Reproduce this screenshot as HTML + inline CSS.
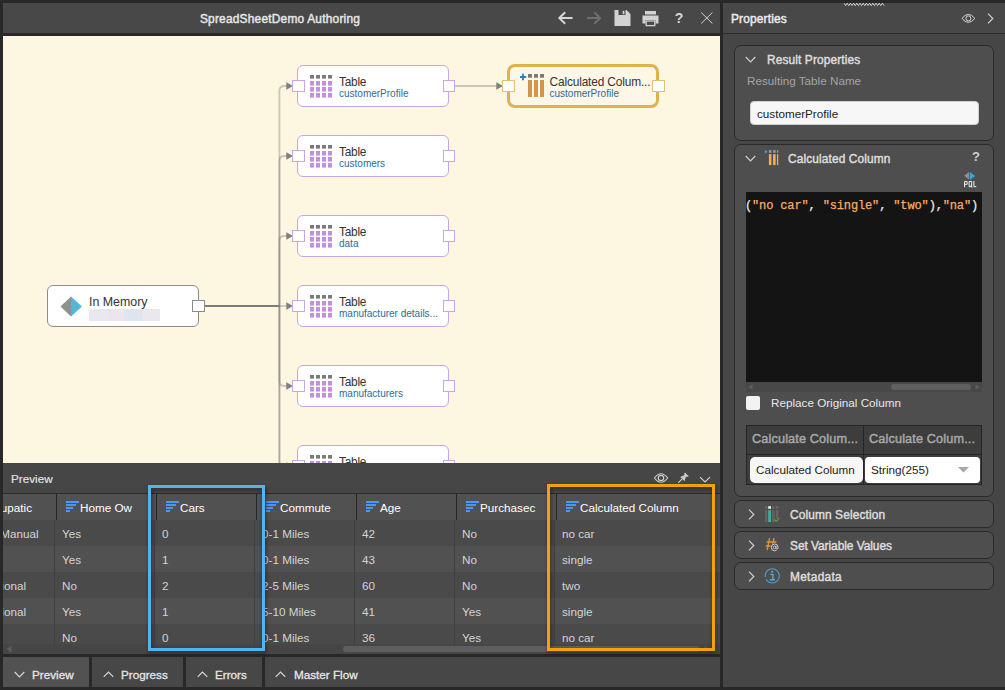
<!DOCTYPE html>
<html>
<head>
<meta charset="utf-8">
<title>SpreadSheetDemo Authoring</title>
<style>
*{box-sizing:border-box;margin:0;padding:0}
html,body{width:1005px;height:690px;overflow:hidden;background:#282828;font-family:"Liberation Sans",sans-serif;}
.abs{position:absolute}
#root{position:relative;width:1005px;height:690px;overflow:hidden;background:#282828}
/* left header */
#hdr{left:3px;top:3px;width:717px;height:30px;background:#484848}
#hdr .title{left:0;top:1px;width:554px;height:30px;line-height:30px;text-align:center;color:#e6e6e6;font-size:11.9px;font-weight:normal;-webkit-text-stroke:0.45px #e6e6e6;letter-spacing:0.22px}
/* canvas */
#canvas{left:3px;top:36px;width:717px;height:427px;background:#fdf6e1;overflow:hidden}
.node{position:absolute;width:152px;height:42px;background:#fff;border:1px solid #c9a6e6;border-radius:6px}
.node .t1{position:absolute;left:41px;top:9px;font-size:11.9px;letter-spacing:-0.25px;color:#333;white-space:nowrap;line-height:14px}
.node .t2{position:absolute;left:41px;top:22px;font-size:10px;color:#2a6c9c;white-space:nowrap;line-height:12px}
.port{position:absolute;width:12.5px;height:12px;background:#fff;border:1px solid #c9a6e6}
.ticon{position:absolute;left:12px;top:8px;width:22px;height:24px}
/* preview */
#prev{left:3px;top:463px;width:717px;height:191px;background:#464646;overflow:hidden}
#prev .ptitle{left:8px;top:8px;font-size:11.7px;color:#e0e0e0;-webkit-text-stroke:0.2px #e0e0e0;line-height:16px}
#grid{left:0;top:30px;width:718px;height:161px;overflow:hidden}
.hrow{position:absolute;left:0;top:0;width:718px;height:27px;background:#515151;border-top:1px solid #2c2c2c}
.drow{position:absolute;left:0;width:718px;height:26px}
.r0{background:#4a4a4a}.r1{background:#515151}
.hc{position:absolute;top:0;height:26px;line-height:27px;color:#ffffff;font-size:11.7px;white-space:nowrap;border-left:1px solid #262626;padding-left:23px}
.dc{position:absolute;top:0;height:26px;line-height:27px;color:#d4d4d4;font-size:11.7px;white-space:nowrap}
.vs{position:absolute;top:27px;width:1px;height:133px;background:#3f3f3f}
/* tabs */
.tl{top:0;line-height:35px;-webkit-text-stroke:0.3px #e6e6e6}
.tab{position:absolute;top:657px;height:30px;background:#474747;color:#e6e6e6;font-size:11.7px;line-height:34px;white-space:nowrap}
/* properties */
#props{left:723px;top:3px;width:282px;height:684px;background:#464646}
#props .ph{left:0;top:0;width:282px;height:31px;background:#484848;border-bottom:1px solid #2d2d2d}
.panel{position:absolute;left:11px;width:260px;background:#4e4e4e;border:1px solid #2a2a2a;border-radius:7px}
.code{font-family:'Liberation Mono',monospace;font-size:12px;color:#ececec;white-space:pre;line-height:16px;letter-spacing:-0.14px;-webkit-text-stroke:0.25px #ececec}
.code b{font-weight:normal;color:#f6ae66;-webkit-text-stroke:0.25px #f6ae66}
.pt{position:absolute;font-size:11.9px;letter-spacing:0.12px;font-weight:normal;-webkit-text-stroke:0.45px currentColor;color:#dcdcdc;white-space:nowrap;line-height:16px}
</style>
</head>
<body>
<div id="root">

<!-- ===== left header ===== -->
<div id="hdr" class="abs">
  <div class="title abs">SpreadSheetDemo Authoring</div>
  <svg class="abs" style="left:552px;top:5px" width="164" height="22" viewBox="555 8 164 22">
    <path d="M572.5 18 H559.5 M565.2 12.2 L559.3 18 L565.2 23.8" stroke="#d6d6d6" stroke-width="2" fill="none"/>
    <path d="M587 18 H600 M594.3 12.2 L600.2 18 L594.3 23.8" stroke="#6e6e6e" stroke-width="2" fill="none"/>
    <path d="M614.5 10 H626.5 L630.5 14 V26 H614.5 Z" fill="#d2d2d2"/>
    <rect x="618.5" y="10" width="7" height="5" fill="#484848"/><rect x="622.6" y="10.8" width="1.8" height="3.4" fill="#d2d2d2"/>
    <path d="M645 11 H656 V14.5 H645 Z" fill="#d2d2d2"/>
    <path d="M642.5 15.5 H658.5 V23.5 H655.5 V20 H645.5 V23.5 H642.5 Z" fill="#d2d2d2"/>
    <rect x="646.2" y="21" width="8.6" height="4.6" fill="none" stroke="#d2d2d2" stroke-width="1.3"/>
    <path d="M701.2 12.5 L712.4 23.5 M712.4 12.5 L701.2 23.5" stroke="#d6d6d6" stroke-width="1" fill="none"/>
  </svg>
  <div class="abs" style="left:670px;top:0;width:12px;height:30px;line-height:30px;color:#d6d6d6;font-size:14px;font-weight:bold;text-align:center">?</div>

</div>

<!-- ===== canvas ===== -->
<div id="canvas" class="abs">
<div class="abs" style="left:-3px;top:-36px;width:1005px;height:690px">
<svg class="abs" style="left:0;top:0" width="1005" height="690" viewBox="0 0 1005 690"><path d="M279.4 306 V91 Q279.4 86 284.4 86 H287.5" stroke="#7a7a7a" stroke-opacity="0.38" stroke-width="1.8" fill="none"/><path d="M286.3 82.2 L293 86 L286.3 89.8 Z" fill="#7e7e7e"/><path d="M279.4 306 V161 Q279.4 156 284.4 156 H287.5" stroke="#7a7a7a" stroke-opacity="0.38" stroke-width="1.8" fill="none"/><path d="M286.3 152.2 L293 156 L286.3 159.8 Z" fill="#7e7e7e"/><path d="M279.4 306 V241 Q279.4 236 284.4 236 H287.5" stroke="#7a7a7a" stroke-opacity="0.38" stroke-width="1.8" fill="none"/><path d="M286.3 232.2 L293 236 L286.3 239.8 Z" fill="#7e7e7e"/><path d="M279 306 H287.5" stroke="#7a7a7a" stroke-opacity="0.38" stroke-width="1.8" fill="none"/><path d="M286.3 302.2 L293 306 L286.3 309.8 Z" fill="#7e7e7e"/><path d="M279.4 306 V381 Q279.4 386 284.4 386 H287.5" stroke="#7a7a7a" stroke-opacity="0.38" stroke-width="1.8" fill="none"/><path d="M286.3 382.2 L293 386 L286.3 389.8 Z" fill="#7e7e7e"/><path d="M279.4 306 V461 Q279.4 466 284.4 466 H287.5" stroke="#7a7a7a" stroke-opacity="0.38" stroke-width="1.8" fill="none"/><path d="M286.3 462.2 L293 466 L286.3 469.8 Z" fill="#7e7e7e"/><path d="M279.4 306 V541 Q279.4 546 284.4 546 H287.5" stroke="#7a7a7a" stroke-opacity="0.38" stroke-width="1.8" fill="none"/><path d="M204.5 306 H279.6" stroke="#7c7c7c" stroke-width="2.2" fill="none"/><path d="M454.5 86 H497" stroke="#7a7a7a" stroke-opacity="0.38" stroke-width="1.8" fill="none"/><path d="M496.3 82.2 L503 86 L496.3 89.8 Z" fill="#7e7e7e"/></svg>
<div class="node" style="left:297px;top:65px"><svg class="ticon" viewBox="0 0 22 24"><rect x="0" y="1" width="4" height="3.6" fill="#7a7a7a"/><rect x="0" y="7" width="4" height="4.6" fill="#c290de"/><rect x="0" y="13" width="4" height="4.6" fill="#c290de"/><rect x="0" y="19" width="4" height="4.6" fill="#c290de"/><rect x="6" y="1" width="4" height="3.6" fill="#7a7a7a"/><rect x="6" y="7" width="4" height="4.6" fill="#c290de"/><rect x="6" y="13" width="4" height="4.6" fill="#c290de"/><rect x="6" y="19" width="4" height="4.6" fill="#c290de"/><rect x="12" y="1" width="4" height="3.6" fill="#7a7a7a"/><rect x="12" y="7" width="4" height="4.6" fill="#c290de"/><rect x="12" y="13" width="4" height="4.6" fill="#c290de"/><rect x="12" y="19" width="4" height="4.6" fill="#c290de"/><rect x="18" y="1" width="4" height="3.6" fill="#7a7a7a"/><rect x="18" y="7" width="4" height="4.6" fill="#c290de"/><rect x="18" y="13" width="4" height="4.6" fill="#c290de"/><rect x="18" y="19" width="4" height="4.6" fill="#c290de"/></svg><div class="t1">Table</div><div class="t2">customerProfile</div></div>
<div class="port" style="left:292px;top:80px"></div>
<div class="port" style="left:442.5px;top:80px"></div>
<div class="node" style="left:297px;top:135px"><svg class="ticon" viewBox="0 0 22 24"><rect x="0" y="1" width="4" height="3.6" fill="#7a7a7a"/><rect x="0" y="7" width="4" height="4.6" fill="#c290de"/><rect x="0" y="13" width="4" height="4.6" fill="#c290de"/><rect x="0" y="19" width="4" height="4.6" fill="#c290de"/><rect x="6" y="1" width="4" height="3.6" fill="#7a7a7a"/><rect x="6" y="7" width="4" height="4.6" fill="#c290de"/><rect x="6" y="13" width="4" height="4.6" fill="#c290de"/><rect x="6" y="19" width="4" height="4.6" fill="#c290de"/><rect x="12" y="1" width="4" height="3.6" fill="#7a7a7a"/><rect x="12" y="7" width="4" height="4.6" fill="#c290de"/><rect x="12" y="13" width="4" height="4.6" fill="#c290de"/><rect x="12" y="19" width="4" height="4.6" fill="#c290de"/><rect x="18" y="1" width="4" height="3.6" fill="#7a7a7a"/><rect x="18" y="7" width="4" height="4.6" fill="#c290de"/><rect x="18" y="13" width="4" height="4.6" fill="#c290de"/><rect x="18" y="19" width="4" height="4.6" fill="#c290de"/></svg><div class="t1">Table</div><div class="t2">customers</div></div>
<div class="port" style="left:292px;top:150px"></div>
<div class="port" style="left:442.5px;top:150px"></div>
<div class="node" style="left:297px;top:215px"><svg class="ticon" viewBox="0 0 22 24"><rect x="0" y="1" width="4" height="3.6" fill="#7a7a7a"/><rect x="0" y="7" width="4" height="4.6" fill="#c290de"/><rect x="0" y="13" width="4" height="4.6" fill="#c290de"/><rect x="0" y="19" width="4" height="4.6" fill="#c290de"/><rect x="6" y="1" width="4" height="3.6" fill="#7a7a7a"/><rect x="6" y="7" width="4" height="4.6" fill="#c290de"/><rect x="6" y="13" width="4" height="4.6" fill="#c290de"/><rect x="6" y="19" width="4" height="4.6" fill="#c290de"/><rect x="12" y="1" width="4" height="3.6" fill="#7a7a7a"/><rect x="12" y="7" width="4" height="4.6" fill="#c290de"/><rect x="12" y="13" width="4" height="4.6" fill="#c290de"/><rect x="12" y="19" width="4" height="4.6" fill="#c290de"/><rect x="18" y="1" width="4" height="3.6" fill="#7a7a7a"/><rect x="18" y="7" width="4" height="4.6" fill="#c290de"/><rect x="18" y="13" width="4" height="4.6" fill="#c290de"/><rect x="18" y="19" width="4" height="4.6" fill="#c290de"/></svg><div class="t1">Table</div><div class="t2">data</div></div>
<div class="port" style="left:292px;top:230px"></div>
<div class="port" style="left:442.5px;top:230px"></div>
<div class="node" style="left:297px;top:285px"><svg class="ticon" viewBox="0 0 22 24"><rect x="0" y="1" width="4" height="3.6" fill="#7a7a7a"/><rect x="0" y="7" width="4" height="4.6" fill="#c290de"/><rect x="0" y="13" width="4" height="4.6" fill="#c290de"/><rect x="0" y="19" width="4" height="4.6" fill="#c290de"/><rect x="6" y="1" width="4" height="3.6" fill="#7a7a7a"/><rect x="6" y="7" width="4" height="4.6" fill="#c290de"/><rect x="6" y="13" width="4" height="4.6" fill="#c290de"/><rect x="6" y="19" width="4" height="4.6" fill="#c290de"/><rect x="12" y="1" width="4" height="3.6" fill="#7a7a7a"/><rect x="12" y="7" width="4" height="4.6" fill="#c290de"/><rect x="12" y="13" width="4" height="4.6" fill="#c290de"/><rect x="12" y="19" width="4" height="4.6" fill="#c290de"/><rect x="18" y="1" width="4" height="3.6" fill="#7a7a7a"/><rect x="18" y="7" width="4" height="4.6" fill="#c290de"/><rect x="18" y="13" width="4" height="4.6" fill="#c290de"/><rect x="18" y="19" width="4" height="4.6" fill="#c290de"/></svg><div class="t1">Table</div><div class="t2">manufacturer details...</div></div>
<div class="port" style="left:292px;top:300px"></div>
<div class="port" style="left:442.5px;top:300px"></div>
<div class="node" style="left:297px;top:365px"><svg class="ticon" viewBox="0 0 22 24"><rect x="0" y="1" width="4" height="3.6" fill="#7a7a7a"/><rect x="0" y="7" width="4" height="4.6" fill="#c290de"/><rect x="0" y="13" width="4" height="4.6" fill="#c290de"/><rect x="0" y="19" width="4" height="4.6" fill="#c290de"/><rect x="6" y="1" width="4" height="3.6" fill="#7a7a7a"/><rect x="6" y="7" width="4" height="4.6" fill="#c290de"/><rect x="6" y="13" width="4" height="4.6" fill="#c290de"/><rect x="6" y="19" width="4" height="4.6" fill="#c290de"/><rect x="12" y="1" width="4" height="3.6" fill="#7a7a7a"/><rect x="12" y="7" width="4" height="4.6" fill="#c290de"/><rect x="12" y="13" width="4" height="4.6" fill="#c290de"/><rect x="12" y="19" width="4" height="4.6" fill="#c290de"/><rect x="18" y="1" width="4" height="3.6" fill="#7a7a7a"/><rect x="18" y="7" width="4" height="4.6" fill="#c290de"/><rect x="18" y="13" width="4" height="4.6" fill="#c290de"/><rect x="18" y="19" width="4" height="4.6" fill="#c290de"/></svg><div class="t1">Table</div><div class="t2">manufacturers</div></div>
<div class="port" style="left:292px;top:380px"></div>
<div class="port" style="left:442.5px;top:380px"></div>
<div class="node" style="left:297px;top:445px"><svg class="ticon" viewBox="0 0 22 24"><rect x="0" y="1" width="4" height="3.6" fill="#7a7a7a"/><rect x="0" y="7" width="4" height="4.6" fill="#c290de"/><rect x="0" y="13" width="4" height="4.6" fill="#c290de"/><rect x="0" y="19" width="4" height="4.6" fill="#c290de"/><rect x="6" y="1" width="4" height="3.6" fill="#7a7a7a"/><rect x="6" y="7" width="4" height="4.6" fill="#c290de"/><rect x="6" y="13" width="4" height="4.6" fill="#c290de"/><rect x="6" y="19" width="4" height="4.6" fill="#c290de"/><rect x="12" y="1" width="4" height="3.6" fill="#7a7a7a"/><rect x="12" y="7" width="4" height="4.6" fill="#c290de"/><rect x="12" y="13" width="4" height="4.6" fill="#c290de"/><rect x="12" y="19" width="4" height="4.6" fill="#c290de"/><rect x="18" y="1" width="4" height="3.6" fill="#7a7a7a"/><rect x="18" y="7" width="4" height="4.6" fill="#c290de"/><rect x="18" y="13" width="4" height="4.6" fill="#c290de"/><rect x="18" y="19" width="4" height="4.6" fill="#c290de"/></svg><div class="t1">Table</div><div class="t2">orders</div></div>
<div class="port" style="left:292px;top:460px"></div>
<div class="port" style="left:442.5px;top:460px"></div>
<div class="node" style="left:47px;top:285px;border-color:#8c8c8c"><svg class="abs" style="left:12px;top:10px" width="24" height="22" viewBox="0 0 24 22"><path d="M0.5 10.5 L11 0.5 V20.5 Z" fill="#909090"/><path d="M11 0.5 L22 10.5 L11 20.5 Z" fill="#52b6d8"/></svg><div class="t1" style="font-size:12.4px;letter-spacing:0">In Memory</div><div class="abs" style="left:41px;top:23px;width:71px;height:12px;background:linear-gradient(90deg,#e9e8ef 0 25%,#ece5ee 25% 49%,#dde5ef 49% 75%,#ebe7ef 75%)"></div></div>
<div class="port" style="left:192px;top:300px;border-color:#8c8c8c"></div>
<div class="node" style="left:506.5px;top:64px;width:152.5px;height:44px;border:3px solid #dfb14f;border-radius:8px;background:#fef6e7"><svg class="abs" style="left:10px;top:6px" width="26" height="25" viewBox="0 0 26 25"><path d="M3 0.8 V7.2 M-0.2 4 H6.2" stroke="#2a7fc0" stroke-width="1.9" fill="none"/><rect x="8" y="1" width="4" height="3.7" fill="#7a7a7a"/><rect x="8" y="7" width="4" height="17" fill="#d0964c"/><rect x="14" y="1" width="4" height="3.7" fill="#7a7a7a"/><rect x="14" y="7" width="4" height="17" fill="#d0964c"/><rect x="20" y="1" width="4" height="3.7" fill="#7a7a7a"/><rect x="20" y="7" width="4" height="17" fill="#d0964c"/></svg><div class="t1" style="left:40px;top:8px;letter-spacing:-0.15px">Calculated Colum...</div><div class="t2" style="left:40px;top:21px">customerProfile</div></div>
<div class="port" style="left:502px;top:80px;border-color:#e3c078"></div>
<div class="port" style="left:652.3px;top:80px;border-color:#e3c078"></div>
</div>
</div>

<!-- ===== preview ===== -->
<div id="prev" class="abs">
  <div class="ptitle abs">Preview</div>
  <svg class="abs" style="left:648px;top:8px" width="64" height="14" viewBox="651 471 64 14">
    <path d="M654.4 478 Q661 469.4 667.7 478 Q661 486.6 654.4 478 Z" stroke="#cdcdcd" stroke-width="1.1" fill="none"/>
    <circle cx="661" cy="478" r="2.7" stroke="#cdcdcd" stroke-width="1.2" fill="none"/>
    <path d="M678.2 482.8 L682.2 478.8" stroke="#cdcdcd" stroke-width="1.1" fill="none"/>
    <path d="M680.2 477 L683.6 475.6 L685.4 473.4 L687.8 475.8 L685.6 477.6 L684.6 481.2 Z" fill="#c9c9c9"/>
    <path d="M684.6 473 L688.2 476.6" stroke="#c9c9c9" stroke-width="1.3" fill="none"/>
    <path d="M700 477.2 L705 482 L710 477.2" stroke="#d4d4d4" stroke-width="1.1" fill="none"/>
  </svg>
  <svg class="abs" style="left:712px;top:174px" width="5" height="5" viewBox="0 0 5 5"><path d="M0.3 0.6 H4.7 L2.5 4.6 Z" fill="#626262"/></svg>
  <div id="grid" class="abs">
<div class="hrow">
<div class="hc" style="left:-47px;width:100px;border-left:none;padding-left:0;text-align:right;padding-right:24px">Occupatic</div>
<div class="hc" style="left:53px;width:100px"><svg class="abs" style="left:9px;top:7px" width="14" height="12" viewBox="0 0 14 12"><path d="M0 1 H13 M0 4 H10 M0 7 H7 M0 10 H4" stroke="#4d96f5" stroke-width="2" fill="none"/></svg>Home Ow</div>
<div class="hc" style="left:153px;width:100px"><svg class="abs" style="left:9px;top:7px" width="14" height="12" viewBox="0 0 14 12"><path d="M0 1 H13 M0 4 H10 M0 7 H7 M0 10 H4" stroke="#4d96f5" stroke-width="2" fill="none"/></svg>Cars</div>
<div class="hc" style="left:253px;width:100px"><svg class="abs" style="left:9px;top:7px" width="14" height="12" viewBox="0 0 14 12"><path d="M0 1 H13 M0 4 H10 M0 7 H7 M0 10 H4" stroke="#4d96f5" stroke-width="2" fill="none"/></svg>Commute</div>
<div class="hc" style="left:353px;width:100px"><svg class="abs" style="left:9px;top:7px" width="14" height="12" viewBox="0 0 14 12"><path d="M0 1 H13 M0 4 H10 M0 7 H7 M0 10 H4" stroke="#4d96f5" stroke-width="2" fill="none"/></svg>Age</div>
<div class="hc" style="left:453px;width:100px"><svg class="abs" style="left:9px;top:7px" width="14" height="12" viewBox="0 0 14 12"><path d="M0 1 H13 M0 4 H10 M0 7 H7 M0 10 H4" stroke="#4d96f5" stroke-width="2" fill="none"/></svg>Purchasec</div>
<div class="hc" style="left:553px;width:165px"><svg class="abs" style="left:9px;top:7px" width="14" height="12" viewBox="0 0 14 12"><path d="M0 1 H13 M0 4 H10 M0 7 H7 M0 10 H4" stroke="#4d96f5" stroke-width="2" fill="none"/></svg>Calculated Column</div>
</div>
<div class="drow r0" style="top:27px">
<div class="dc" style="left:-47px;width:100px;text-align:right;padding-right:17.5px">Skilled Manual</div>
<div class="dc" style="left:59px">Yes</div>
<div class="dc" style="left:159px">0</div>
<div class="dc" style="left:259px">0-1 Miles</div>
<div class="dc" style="left:359px">42</div>
<div class="dc" style="left:459px">No</div>
<div class="dc" style="left:559px">no car</div>
</div>
<div class="drow r1" style="top:53px">
<div class="dc" style="left:-47px;width:100px;text-align:right;padding-right:17.5px"></div>
<div class="dc" style="left:59px">Yes</div>
<div class="dc" style="left:159px">1</div>
<div class="dc" style="left:259px">0-1 Miles</div>
<div class="dc" style="left:359px">43</div>
<div class="dc" style="left:459px">No</div>
<div class="dc" style="left:559px">single</div>
</div>
<div class="drow r0" style="top:79px">
<div class="dc" style="left:-47px;width:100px;text-align:right;padding-right:30px">Professional</div>
<div class="dc" style="left:59px">No</div>
<div class="dc" style="left:159px">2</div>
<div class="dc" style="left:259px">2-5 Miles</div>
<div class="dc" style="left:359px">60</div>
<div class="dc" style="left:459px">No</div>
<div class="dc" style="left:559px">two</div>
</div>
<div class="drow r1" style="top:105px">
<div class="dc" style="left:-47px;width:100px;text-align:right;padding-right:30px">Professional</div>
<div class="dc" style="left:59px">Yes</div>
<div class="dc" style="left:159px">1</div>
<div class="dc" style="left:259px">5-10 Miles</div>
<div class="dc" style="left:359px">41</div>
<div class="dc" style="left:459px">Yes</div>
<div class="dc" style="left:559px">single</div>
</div>
<div class="drow r0" style="top:131px">
<div class="dc" style="left:-47px;width:100px;text-align:right;padding-right:17.5px"></div>
<div class="dc" style="left:59px">No</div>
<div class="dc" style="left:159px">0</div>
<div class="dc" style="left:259px">0-1 Miles</div>
<div class="dc" style="left:359px">36</div>
<div class="dc" style="left:459px">Yes</div>
<div class="dc" style="left:559px">no car</div>
</div>
<div class="vs" style="left:51px"></div>
<div class="vs" style="left:151px"></div>
<div class="vs" style="left:251px"></div>
<div class="vs" style="left:351px"></div>
<div class="vs" style="left:451px"></div>
<div class="vs" style="left:551px"></div>
<div class="abs" style="left:0;top:151px;width:718px;height:10px;background:#464646"></div>
<div class="abs" style="left:340px;top:153px;width:357px;height:6px;background:#5e5e5e;border-radius:3px"></div><svg class="abs" style="left:701px;top:152px" width="6" height="8" viewBox="0 0 6 8"><path d="M0.5 0.5 L5.5 4 L0.5 7.5 Z" fill="#5c5c5c"/></svg>
<svg class="abs" style="left:3px;top:152px" width="6" height="8" viewBox="0 0 6 8"><path d="M5.5 0.5 L0.5 4 L5.5 7.5 Z" fill="#5c5c5c"/></svg>
</div>
</div>

<!-- ===== tabs ===== -->
<div class="tab" style="left:3px;width:86px;background:#525252"><svg class="abs" style="left:11px;top:14px" width="11" height="7" viewBox="0 0 11 7"><path d="M0.7 1 L5.5 5.8 L10.3 1" stroke="#d8d8d8" stroke-width="1.2" fill="none"/></svg><span class="abs tl" style="left:29px">Preview</span></div>
<div class="tab" style="left:92px;width:91px"><svg class="abs" style="left:11px;top:14px" width="11" height="7" viewBox="0 0 11 7"><path d="M0.7 5.8 L5.5 1 L10.3 5.8" stroke="#d8d8d8" stroke-width="1.2" fill="none"/></svg><span class="abs tl" style="left:29px">Progress</span></div>
<div class="tab" style="left:186px;width:76px"><svg class="abs" style="left:11px;top:14px" width="11" height="7" viewBox="0 0 11 7"><path d="M0.7 5.8 L5.5 1 L10.3 5.8" stroke="#d8d8d8" stroke-width="1.2" fill="none"/></svg><span class="abs tl" style="left:29px">Errors</span></div>
<div class="tab" style="left:265px;width:455px"><svg class="abs" style="left:10px;top:14px" width="11" height="7" viewBox="0 0 11 7"><path d="M0.7 5.8 L5.5 1 L10.3 5.8" stroke="#d8d8d8" stroke-width="1.2" fill="none"/></svg><span class="abs tl" style="left:29px">Master Flow</span></div>

<!-- ===== highlight overlays ===== -->
<div class="abs" style="left:148px;top:485px;width:117px;height:166px;border:3px solid #52b4ea;filter:drop-shadow(1px 2px 2px rgba(0,0,0,0.45))"></div>
<div class="abs" style="left:547px;top:484px;width:168px;height:166.5px;border:3px solid #efa404;filter:drop-shadow(1px 2px 2px rgba(0,0,0,0.45))"></div>

<!-- ===== properties ===== -->
<div id="props" class="abs">
  <div class="ph abs"></div>
<svg class="abs" style="left:121px;top:-0.5px" width="41" height="3" viewBox="0 0 41 3"><polyline points="0.0,0.2 1.6,2.6 3.2,0.2 4.8,2.6 6.4,0.2 8.0,2.6 9.6,0.2 11.2,2.6 12.8,0.2 14.4,2.6 16.0,0.2 17.6,2.6 19.2,0.2 20.8,2.6 22.4,0.2 24.0,2.6 25.6,0.2 27.2,2.6 28.8,0.2 30.4,2.6 32.0,0.2 33.6,2.6 35.2,0.2 36.8,2.6 38.4,0.2 40.0,2.6" stroke="#e0e0e0" stroke-width="0.9" fill="none"/></svg>
<div class="pt" style="left:8px;top:8px;color:#ececec;letter-spacing:0.17px">Properties</div>
<svg class="abs" style="left:238px;top:10px" width="15" height="11" viewBox="0 0 15 11"><path d="M0.9 5.4 Q7.4 -2.6 13.9 5.4 Q7.4 13.4 0.9 5.4 Z" stroke="#d4d4d4" stroke-width="1" fill="none"/><circle cx="7.4" cy="5.4" r="2.5" stroke="#d4d4d4" stroke-width="1" fill="none"/></svg>
<svg class="abs" style="left:264px;top:10px" width="7" height="11" viewBox="0 0 7 11"><path d="M1 0.7 L5.8 5.5 L1 10.3" stroke="#cfcfcf" stroke-width="1.2" fill="none"/></svg>
<div class="panel" style="top:42px;height:96px"><svg class="abs" style="left:10.3px;top:10.3px" width="11" height="7" viewBox="0 0 11 7"><path d="M0.7 1 L5.5 5.8 L10.3 1" stroke="#cfcfcf" stroke-width="1.2" fill="none"/></svg><div class="pt" style="left:32px;top:6px">Result Properties</div><div class="abs" style="left:12px;top:27px;font-size:11.7px;color:#a4a4a4;line-height:16px;white-space:nowrap">Resulting Table Name</div><div class="abs" style="left:15px;top:55px;width:229px;height:24px;background:#f7f7f7;border-radius:4px;border:1px solid #d0d0d0;color:#222;font-size:11.7px;line-height:23px;padding-left:6px">customerProfile</div></div>
<div class="panel" style="top:141px;height:353px"><svg class="abs" style="left:10.3px;top:10.3px" width="11" height="7" viewBox="0 0 11 7"><path d="M0.7 1 L5.5 5.8 L10.3 1" stroke="#cfcfcf" stroke-width="1.2" fill="none"/></svg><svg class="abs" style="left:29px;top:4px" width="16" height="18" viewBox="764 149 16 18"><path d="M764.8 149.8 L767.7 151.8 L764.8 153.8 Z" fill="#4a9ad6"/><rect x="768.9" y="150.1" width="2.5" height="2.7" fill="#9a9a9a"/><rect x="773.1" y="150.1" width="2.5" height="2.7" fill="#9a9a9a"/><rect x="777" y="150.1" width="1.2" height="2.7" fill="#9a9a9a"/><rect x="768.9" y="154.2" width="2.5" height="10.9" fill="#efb25f"/><rect x="773.1" y="154.2" width="2.5" height="10.9" fill="#efb25f"/><rect x="777" y="154.2" width="1.2" height="10.9" fill="#efb25f"/></svg><div class="pt" style="left:53px;top:6px">Calculated Column</div><div class="abs" style="left:236px;top:4px;width:10px;font-size:13px;font-weight:bold;color:#d0d0d0;line-height:16px;text-align:center">?</div><svg class="abs" style="left:228px;top:26px" width="15" height="18" viewBox="963 171 15 18"><path d="M964.1 175.7 L969.2 171.7 V179.7 Z" fill="#8e8e8e"/><path d="M969.9 171.9 L975.2 176 L969.9 180 Z" fill="#2fa9e2"/><path d="M964.6 187.2 V181.5 H967.1 V184.3 H964.6 M969.1 181.5 H971.7 V186.7 H969.1 Z M970.6 185.6 L972.2 187.6 M973.9 181.1 V186.7 H976.3" stroke="#f0f0f0" stroke-width="1" fill="none"/></svg><div class="abs" style="left:11px;top:47px;width:236px;height:190px;background:#141414;overflow:hidden"><div class="abs code" style="left:-1px;top:5.5px">(<b>"no car"</b>, <b>"single"</b>, <b>"two"</b>),<b>"na"</b>)</div></div><div class="abs" style="left:11px;top:237px;width:236px;height:10px;background:#484848"></div><div class="abs" style="left:156px;top:239px;width:80px;height:6px;border-radius:3px;background:#5f5f5f"></div><svg class="abs" style="left:13px;top:239px" width="5" height="6" viewBox="0 0 5 6"><path d="M4.5 0 L0.5 3 L4.5 6 Z" fill="#5c5c5c"/></svg><svg class="abs" style="left:240px;top:239px" width="5" height="6" viewBox="0 0 5 6"><path d="M0.5 0 L4.5 3 L0.5 6 Z" fill="#5c5c5c"/></svg><div class="abs" style="left:11px;top:251px;width:14px;height:14px;background:#f2f2f2;border-radius:2px"></div><div class="abs" style="left:36px;top:250px;font-size:11.7px;color:#e8e8e8;line-height:16px;white-space:nowrap">Replace Original Column</div><div class="abs" style="left:11px;top:280px;width:236px;height:60px;background:#3d3d3d;border:1px solid #252525"></div><div class="abs" style="left:128px;top:280px;width:1px;height:60px;background:#252525"></div><div class="abs" style="left:11px;top:309px;width:236px;height:1px;background:#252525"></div><div class="pt" style="left:17px;top:286px;color:#a8a8a8;font-size:12.7px;letter-spacing:0.14px">Calculate Colum...</div><div class="pt" style="left:134px;top:286px;color:#a8a8a8;font-size:12.7px;letter-spacing:0.14px">Calculate Colum...</div><div class="abs" style="left:15px;top:312px;width:113px;height:26px;background:#f6f6f6;border-radius:5px;color:#222;font-size:11.7px;line-height:26px;padding-left:6px;white-space:nowrap">Calculated Column</div><div class="abs" style="left:130px;top:312px;width:115px;height:26px;background:#fff;border-radius:4px;color:#222;font-size:11.7px;line-height:26px;padding-left:6px;white-space:nowrap">String(255)</div><svg class="abs" style="left:223px;top:322px" width="11" height="6" viewBox="0 0 11 6"><path d="M0 0 H11 L5.5 5.5 Z" fill="#a8a8a8"/></svg></div>
<div class="panel" style="top:497px;height:28px"><svg class="abs" style="left:12.5px;top:7.5px" width="7" height="11" viewBox="0 0 7 11"><path d="M1 0.7 L5.8 5.5 L1 10.3" stroke="#cfcfcf" stroke-width="1.2" fill="none"/></svg><svg class="abs" style="left:29px;top:4px" width="16" height="17" viewBox="764 505 16 17"><rect x="765.2" y="506.4" width="2" height="2.2" fill="#6c6c6c"/><rect x="765.2" y="510.2" width="2" height="11.8" fill="#646464"/><rect x="768.2" y="506.2" width="2.8" height="2.6" fill="#ececec"/><rect x="768.2" y="510.2" width="2.8" height="11.8" fill="#3cb0a2"/><rect x="772.3" y="506.4" width="2.2" height="2.2" fill="#6c6c6c"/><rect x="772.3" y="510.2" width="2.2" height="11.8" fill="#646464"/><rect x="775.9" y="506.4" width="2.4" height="2.2" fill="#6c6c6c"/><rect x="775.9" y="510.2" width="2.4" height="8.4" fill="#646464"/><path d="M774.4 519.4 L776.4 521.6 L779.2 517.8" stroke="#5aa23c" stroke-width="1.1" fill="none"/></svg><div class="pt" style="left:55px;top:6px">Column Selection</div></div>
<div class="panel" style="top:528px;height:28px"><svg class="abs" style="left:12.5px;top:7.5px" width="7" height="11" viewBox="0 0 7 11"><path d="M1 0.7 L5.8 5.5 L1 10.3" stroke="#cfcfcf" stroke-width="1.2" fill="none"/></svg><svg class="abs" style="left:29px;top:4px" width="18" height="18" viewBox="764 536 18 18"><path d="M769.6 538.2 L767.2 550 M774 538.2 L771.6 550 M766.6 542 H776.4 M765.8 546 H775.6" stroke="#e8922a" stroke-width="1.3" fill="none"/><circle cx="774.7" cy="547.4" r="4.1" fill="#4e4e4e"/><circle cx="774.7" cy="547.4" r="3.4" stroke="#dcdcdc" stroke-width="0.9" fill="none"/><circle cx="774.6" cy="547.4" r="1.3" stroke="#dcdcdc" stroke-width="0.8" fill="none"/><path d="M776 545.8 V548.4 Q776.2 549.2 777.4 548.8" stroke="#dcdcdc" stroke-width="0.8" fill="none"/><rect x="776.6" y="549.2" width="2.2" height="1.6" fill="#4e4e4e"/></svg><div class="pt" style="left:55px;top:6px;letter-spacing:-0.04px">Set Variable Values</div></div>
<div class="panel" style="top:559px;height:28px"><svg class="abs" style="left:12.5px;top:7.5px" width="7" height="11" viewBox="0 0 7 11"><path d="M1 0.7 L5.8 5.5 L1 10.3" stroke="#cfcfcf" stroke-width="1.2" fill="none"/></svg><svg class="abs" style="left:28px;top:4px" width="18" height="18" viewBox="763 567 18 18"><circle cx="772.2" cy="575.9" r="7.1" stroke="#4a9fd0" stroke-width="1.1" fill="none"/><rect x="763.8" y="577" width="2.2" height="3.4" fill="#4e4e4e"/><path d="M770.2 574.4 H772.9 V579.6 M769.8 579.7 H775" stroke="#5aa8d8" stroke-width="1.4" fill="none"/><circle cx="772.1" cy="571.8" r="1.05" fill="#5aa8d8"/></svg><div class="pt" style="left:55px;top:6px;letter-spacing:0.3px">Metadata</div></div>
</div>

</div>
</body>
</html>
